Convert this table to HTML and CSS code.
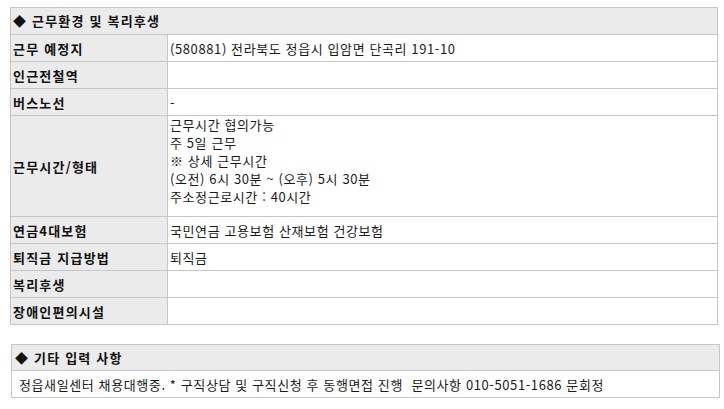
FILE: index.html
```html
<!DOCTYPE html>
<html lang="ko">
<head>
<meta charset="utf-8">
<link rel="stylesheet" href="styles.css">
</head>
<body>
<div class="tbl tbl-main">
  <div class="head">◆ 근무환경 및 복리후생</div>
  <div class="row"><div class="lbl">근무 예정지</div><div class="val">(580881) 전라북도 정읍시 입암면 단곡리 191-10</div></div>
  <div class="row"><div class="lbl">인근전철역</div><div class="val"></div></div>
  <div class="row"><div class="lbl">버스노선</div><div class="val">-</div></div>
  <div class="row row-tall"><div class="lbl">근무시간/형태</div><div class="val val-multi">근무시간 협의가능<br>주 5일 근무<br>※ 상세 근무시간<br>(오전) 6시 30분 ~ (오후) 5시 30분<br>주소정근로시간 : 40시간</div></div>
  <div class="row"><div class="lbl">연금4대보험</div><div class="val">국민연금 고용보험 산재보험 건강보험</div></div>
  <div class="row"><div class="lbl">퇴직금 지급방법</div><div class="val">퇴직금</div></div>
  <div class="row"><div class="lbl">복리후생</div><div class="val"></div></div>
  <div class="row"><div class="lbl">장애인편의시설</div><div class="val"></div></div>
</div>
<div class="tbl tbl-etc">
  <div class="head head-etc">◆ 기타 입력 사항</div>
  <div class="row"><div class="val val-etc">정읍새일센터 채용대행중. * 구직상담 및 구직신청 후 동행면접 진행&nbsp; 문의사항 010-5051-1686 문회정</div></div>
</div>
</body>
</html>
```

FILE: styles.css
```css
html, body {
  margin: 0;
  padding: 0;
  background: #fff;
}
body {
  font-family: "Noto Sans CJK KR", "Noto Sans", sans-serif;
  font-size: 13px;
  color: #1a1a1a;
  letter-spacing: 0.6px;
}
.tbl {
  border: 1px solid #c6c6c6;
  box-sizing: border-box;
}
.tbl-main {
  margin: 7px 0 0 10px;
  width: 708px;
}
.tbl-etc {
  margin: 19px 0 0 11px;
  width: 709px;
}
.head {
  height: 26px;
  line-height: 26px;
  background: #ebebeb;
  font-weight: bold;
  letter-spacing: 1.2px;
  padding-left: 2px;
  color: #111;
}
.head-etc {
  height: 25px;
  line-height: 25px;
  padding-left: 3px;
}
.row {
  display: flex;
  border-top: 1px solid #c6c6c6;
  height: 26px;
}
.row-tall {
  height: 100px;
}
.lbl {
  width: 154px;
  flex: none;
  background: #ebebeb;
  border-right: 1px solid #c6c6c6;
  font-weight: bold;
  letter-spacing: 1.2px;
  padding-left: 2px;
  display: flex;
  align-items: center;
  color: #111;
}
.val {
  flex: 1;
  padding-left: 2px;
  display: flex;
  align-items: center;
}
.val-multi {
  display: block;
  line-height: 18px;
}
.val-etc {
  padding-left: 7px;
}
```
